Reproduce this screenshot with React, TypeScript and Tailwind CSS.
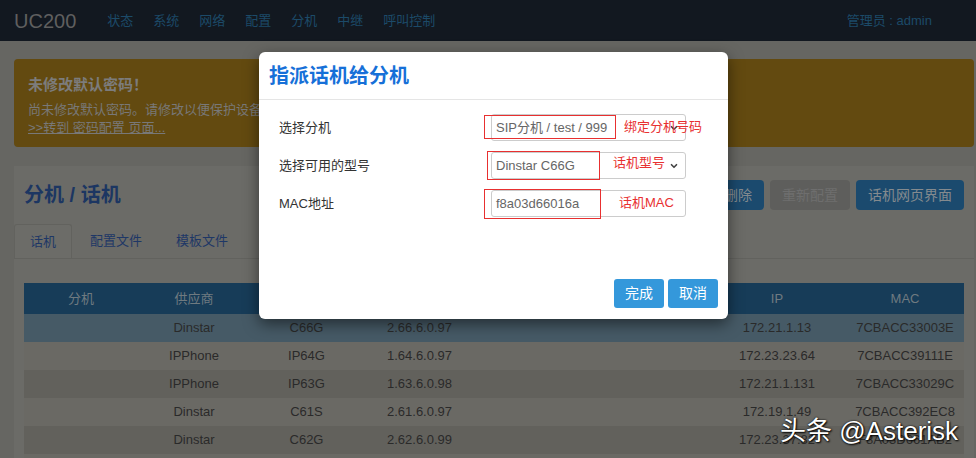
import React from 'react';
import { ChevronDown } from 'lucide-react';

const font = { fontFamily: '"Liberation Sans", "Noto Sans CJK SC", sans-serif' };

const navItems = ['状态', '系统', '网络', '配置', '分机', '中继', '呼叫控制'];

const phones = [
  { vendor: 'Dinstar', model: 'C66G', ver: '2.66.6.0.97', ip: '172.21.1.13', mac: '7CBACC33003E' },
  { vendor: 'IPPhone', model: 'IP64G', ver: '1.64.6.0.97', ip: '172.23.23.64', mac: '7CBACC39111E' },
  { vendor: 'IPPhone', model: 'IP63G', ver: '1.63.6.0.98', ip: '172.21.1.131', mac: '7CBACC33029C' },
  { vendor: 'Dinstar', model: 'C61S', ver: '2.61.6.0.97', ip: '172.19.1.49', mac: '7CBACC392EC8' },
  { vendor: 'Dinstar', model: 'C62G', ver: '2.62.6.0.99', ip: '172.23.37.82', mac: 'F8A03D661AB2' },
  { vendor: 'IPPhone', model: 'IP62', ver: '1.62.6.0.97', ip: '172.23.23.61', mac: '7CBACC39100A' },
];

// page is shown dimmed behind the modal, so colours below are the dimmed ones
const rowBg = ['bg-[#465a66]', 'bg-[#6a6964]', 'bg-[#62615c]'];

export default function App() {
  return (
    <div className="relative w-[976px] h-[458px] overflow-hidden bg-[#666662]" style={font}>
      {/* top bar */}
      <div className="h-[41px] bg-[#121820] flex items-center pl-[14px] pr-[44px]">
        <div className="text-[20px] text-[#5f5f5f] mr-[31px]">UC200</div>
        <div className="flex gap-[20px] text-[13px] text-[#1c4a68]">
          {navItems.map((n) => (
            <span key={n}>{n}</span>
          ))}
        </div>
        <div className="ml-auto text-[13px] text-[#1c4a68]">管理员 : admin</div>
      </div>

      <div className="ml-[14px] w-[960px]">
        {/* warning */}
        <div className="mt-[18px] h-[88px] rounded-[4px] bg-[#634a10] px-[14px] pt-[15px] text-[#787878]">
          <div className="text-[15px] font-bold leading-[22px] text-[#7c7c7c]">未修改默认密码！</div>
          <div className="text-[13px] leading-[18px] mt-[5px]">尚未修改默认密码。请修改以便保护设备安全。</div>
          <div className="text-[13px] leading-[18px] underline">&gt;&gt;转到 密码配置 页面...</div>
        </div>

        {/* main panel */}
        <div className="mt-[19px] bg-[#6b6b67] h-[300px]">
          <div className="flex items-center justify-between h-[38px] mt-[10px] px-[10px] pt-[10px] box-content">
            <div className="text-[20px] font-bold text-[#1c3662]">分机 / 话机</div>
            <div className="flex gap-[6px] text-[14px]">
              <button className="h-[30px] px-[12px] rounded-[4px] bg-[#1b4a6e] text-[#848a8e]">删除</button>
              <button className="h-[30px] px-[12px] rounded-[4px] bg-[#5e5e5c] text-[#6e6e6e]">重新配置</button>
              <button className="h-[30px] px-[12px] rounded-[4px] bg-[#1b4a6e] text-[#848a8e]">话机网页界面</button>
            </div>
          </div>

          <div className="mt-[10px] flex h-[35px] border-b border-[#62625e] text-[13px] text-[#1e3766]">
            <div className="px-[15px] flex items-center border border-b-0 border-[#62625e] rounded-t-[3px] bg-[#6c6c68]">话机</div>
            <div className="px-[18px] flex items-center">配置文件</div>
            <div className="px-[16px] flex items-center">模板文件</div>
          </div>

          <div className="px-[10px] mt-[24px]">
            <table className="w-[940px] table-fixed text-[13px] text-center">
              <colgroup>
                <col className="w-[114px]" />
                <col className="w-[112px]" />
                <col className="w-[113px]" />
                <col className="w-[113px]" />
                <col className="w-[116px]" />
                <col className="w-[116px]" />
                <col className="w-[138px]" />
                <col className="w-[118px]" />
              </colgroup>
              <thead>
                <tr className="h-[31px] bg-[#173c58] text-[#6f7a80]">
                  <th className="font-normal">分机</th>
                  <th className="font-normal">供应商</th>
                  <th className="font-normal">型号</th>
                  <th className="font-normal">版本</th>
                  <th className="font-normal">分机名</th>
                  <th className="font-normal">状态</th>
                  <th className="font-normal">IP</th>
                  <th className="font-normal">MAC</th>
                </tr>
              </thead>
              <tbody className="text-[#2a2a2a]">
                {phones.map((p, i) => (
                  <tr key={p.mac} className={`h-[28px] ${i === 0 ? rowBg[0] : i % 2 === 1 ? rowBg[1] : rowBg[2]}`}>
                    <td></td>
                    <td>{p.vendor}</td>
                    <td>{p.model}</td>
                    <td>{p.ver}</td>
                    <td></td>
                    <td></td>
                    <td>{p.ip}</td>
                    <td>{p.mac}</td>
                  </tr>
                ))}
              </tbody>
            </table>
          </div>
        </div>
      </div>

      {/* dialog */}
      <div className="absolute left-[259px] top-[52px] w-[469px] h-[267px] bg-white rounded-[6px] shadow-[0_5px_15px_rgba(0,0,0,0.5)] flex flex-col">
        <div className="h-[48px] flex items-center px-[10px] border-b border-[#e5e5e5]">
          <div className="text-[20px] font-bold text-[#1670d8]">指派话机给分机</div>
        </div>
        <div className="flex-1 pt-[14px] pl-[20px] flex flex-col gap-[11px] text-[13px]">
          <div className="flex items-center h-[27px]">
            <div className="w-[212px] text-[#333]">选择分机</div>
            <div className="w-[195px] h-[27px] border border-[#ccc] rounded-[3px] flex items-center pl-[4px] pr-[6px] text-[#666]">
              <span>SIP分机 / test / 999</span>
              <ChevronDown className="ml-auto w-[10px] h-[10px] text-[#444]" strokeWidth={4} />
            </div>
          </div>
          <div className="flex items-center h-[27px]">
            <div className="w-[212px] text-[#333]">选择可用的型号</div>
            <div className="w-[195px] h-[27px] border border-[#ccc] rounded-[3px] flex items-center pl-[4px] pr-[6px] text-[#666]">
              <span>Dinstar C66G</span>
              <ChevronDown className="ml-auto w-[10px] h-[10px] text-[#444]" strokeWidth={4} />
            </div>
          </div>
          <div className="flex items-center h-[27px]">
            <div className="w-[212px] text-[#333]">MAC地址</div>
            <div className="w-[195px] h-[27px] border border-[#ccc] rounded-[3px] flex items-center pl-[4px] text-[#666]">
              f8a03d66016a
            </div>
          </div>
        </div>
        <div className="flex justify-end gap-[4px] px-[10px] pb-[11px]">
          <button className="h-[29px] px-[11px] rounded-[3px] bg-[#3498db] text-white text-[14px]">完成</button>
          <button className="h-[29px] px-[11px] rounded-[3px] bg-[#3498db] text-white text-[14px]">取消</button>
        </div>

        {/* red annotations */}
        <div className="absolute left-[225px] top-[63px] w-[132px] h-[24px] border border-[#e83030]"></div>
        <div className="absolute left-[365px] top-[66px] text-[13px] leading-[18px] text-[#e83030]">绑定分机号码</div>
        <div className="absolute left-[228px] top-[99px] w-[113px] h-[29px] border border-[#e83030]"></div>
        <div className="absolute left-[354px] top-[102px] text-[13px] leading-[18px] text-[#e83030] bg-white">话机型号</div>
        <div className="absolute left-[225px] top-[137px] w-[117px] h-[30px] border border-[#e83030]"></div>
        <div className="absolute left-[360px] top-[142px] text-[13px] leading-[18px] text-[#e83030]">话机MAC</div>
      </div>

      {/* watermark */}
      <div className="absolute left-[780px] top-[412px] text-[26px] text-white [text-shadow:1px_1px_2px_#000,0_0_2px_#000]">
        头条 @Asterisk
      </div>
    </div>
  );
}
